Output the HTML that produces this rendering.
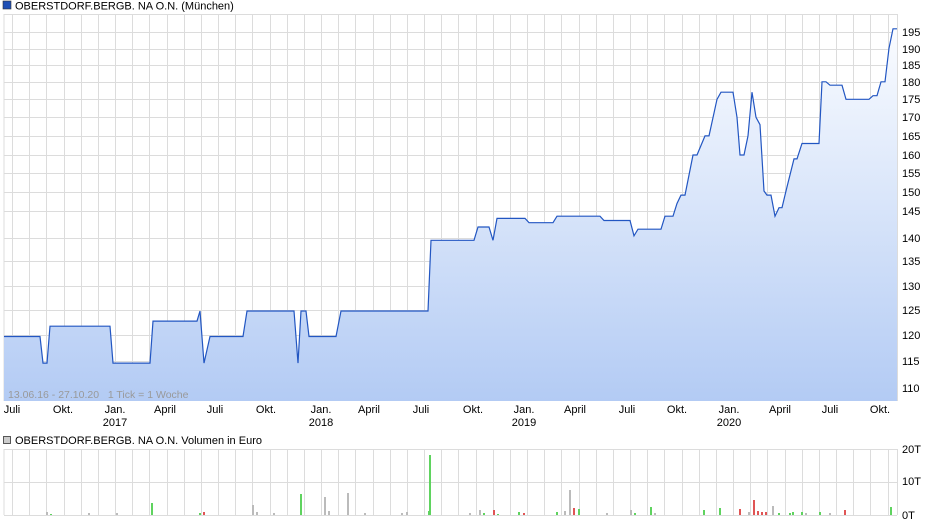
<!DOCTYPE html>
<html><head><meta charset="utf-8"><style>
body{margin:0;width:940px;height:526px;background:#fff;font-family:"Liberation Sans",sans-serif;overflow:hidden}
svg{position:absolute;left:0;top:0}
text{font-family:"Liberation Sans",sans-serif;font-size:11px;fill:#000}
</style></head><body>
<svg id="s" width="940" height="526" xmlns="http://www.w3.org/2000/svg">
<defs><linearGradient id="g" x1="0" y1="0" x2="0" y2="1"><stop offset="0" stop-color="#fafcff"/><stop offset="1" stop-color="#b3cbf4"/></linearGradient></defs>
<rect x="3" y="1" width="8" height="8" fill="#1f4fb5" stroke="#333" stroke-width="0.6"/>
<text x="15" y="9.5">OBERSTDORF.BERGB. NA O.N. (München)</text>
<rect x="3.5" y="436.5" width="7" height="7" fill="#ccc" stroke="#333" stroke-width="0.8"/>
<text x="15" y="444">OBERSTDORF.BERGB. NA O.N. Volumen in Euro</text>
<g id="grid" stroke="#dcdcdc" stroke-width="1"></g>
<path id="area" fill="url(#g)"/>
<g id="grid2" stroke="#c4d4f0" stroke-width="1" opacity="0.5"></g>
<path id="line" fill="none" stroke="#2256c2" stroke-width="1.2"/>
<text x="8" y="398" style="font-size:10.5px;fill:#999;white-space:pre" xml:space="preserve">13.06.16 - 27.10.20   1 Tick = 1 Woche</text>
<g id="lab"></g>
<g id="vol"></g>
</svg>
<script>
var ns="http://www.w3.org/2000/svg";
function el(p,t,a,txt){var e=document.createElementNS(ns,t);for(var k in a)e.setAttribute(k,a[k]);if(txt)e.textContent=txt;document.getElementById(p).appendChild(e);return e;}
var ys={195:32,190:49,185:65,180:82,175:99,170:117,165:136,160:155,155:173,150:192,145:211,140:238,135:261,130:286,125:310,120:335,115:361,110:388};
var L=4,R=897,T=14,B=401;
for(var v in ys){var y=ys[v];el("grid","line",{x1:L,x2:R,y1:y+.5,y2:y+.5});el("lab","text",{x:902,y:y+4},v);}
var months=[];for(var x=12;x<R;x+=17.17)months.push(Math.round(x)+.5);
months.forEach(function(x){el("grid","line",{x1:x,x2:x,y1:T,y2:B});el("grid","line",{x1:x,x2:x,y1:449,y2:515});});
[449,482,515].forEach(function(y){el("grid","line",{x1:L,x2:R,y1:y+.5,y2:y+.5});});
el("grid","line",{x1:R+.5,x2:R+.5,y1:T,y2:B});el("grid","line",{x1:R+.5,x2:R+.5,y1:449,y2:515});
el("grid","line",{x1:L,x2:L,y1:T,y2:B});el("grid","line",{x1:L,x2:R,y1:T+.5,y2:T+.5});
el("grid","line",{x1:L,x2:L,y1:449,y2:515});
var a=32+621.8*Math.log(195);
function py(p){return a-621.8*Math.log(p);}
var d=[[4,119.5],[40,119.5],[43,114.5],[47,114.5],[50,121.5],[110,121.5],[113,114.5],[150,114.5],[153,122.5],[197,122.5],[200,124.5],[204,114.5],[210,119.5],[243,119.5],[247,124.5],[294,124.5],[298,114.5],[301,124.5],[306,124.5],[309,119.5],[336,119.5],[341,124.5],[428,124.5],[431,139.5],[474,139.5],[478,142.5],[489,142.5],[493,139.5],[497,144.5],[525,144.5],[529,143.5],[553,143.5],[557,145],[600,145],[604,144],[630,144],[634,140.5],[638,142],[661,142],[665,145],[673,145],[677,148],[681,150],[685,150],[693,160],[697,160],[705,165],[709,165],[717,175],[721,177],[733,177],[737,170],[740,160],[744,160],[748,165],[752,177],[756,170],[760,168],[764,151],[767,150],[771,150],[775,145],[779,147],[782,147],[787,152],[794,159],[797,159],[802,163],[819,163],[822,180],[826,180],[830,179],[842,179],[846,175],[869,175],[873,176],[877,176],[881,180],[885,180],[889,190],[893,196],[897,196]];
var p="M"+d.map(function(q){return q[0]+","+py(q[1]).toFixed(1)}).join(" L");
document.getElementById("line").setAttribute("d",p);
document.getElementById("area").setAttribute("d",p+" L897,401 L4,401 Z");
var xl=[[12,"Juli"],[63,"Okt."],[115,"Jan.","2017"],[165,"April"],[215,"Juli"],[266,"Okt."],[321,"Jan.","2018"],[369,"April"],[421,"Juli"],[473,"Okt."],[524,"Jan.","2019"],[575,"April"],[627,"Juli"],[677,"Okt."],[729,"Jan.","2020"],[780,"April"],[830,"Juli"],[880,"Okt."]];
xl.forEach(function(q){el("lab","text",{x:q[0],y:413,"text-anchor":"middle"},q[1]);if(q[2])el("lab","text",{x:q[0],y:426,"text-anchor":"middle"},q[2]);});
el("lab","text",{x:902,y:453},"20T");el("lab","text",{x:902,y:485},"10T");el("lab","text",{x:902,y:519},"0T");
var G="#5fd35f",Rd="#e05555",Gy="#bbb";
var vb=[[47,3,Gy],[51,1,G],[89,2,Gy],[117,2,Gy],[152,12,G],[200,2,G],[204,3,Rd],[253,10,Gy],[257,3,Gy],[274,2,Gy],[301,21,G],[325,18,Gy],[329,4,Gy],[348,22,Gy],[365,2,Gy],[402,2,Gy],[407,3,Gy],[429,4,G],[430,60,G],[470,2,Gy],[480,5,Gy],[484,2,G],[494,5,Rd],[498,1,G],[519,3,G],[524,2,Rd],[557,3,G],[565,4,Gy],[570,25,Gy],[574,7,Rd],[579,6,G],[607,2,Gy],[631,5,Gy],[635,2,G],[651,8,G],[655,2,Gy],[704,5,G],[720,7,G],[740,6,Rd],[749,3,Gy],[754,15,Rd],[758,4,Rd],[762,3,Rd],[766,3,Rd],[773,9,Gy],[779,2,G],[790,2,G],[793,3,G],[802,3,G],[806,2,Gy],[820,3,G],[830,2,Gy],[845,5,Rd],[891,8,G]];
vb.forEach(function(q){el("vol","rect",{x:q[0]-1,y:515-q[1],width:2,height:q[1],fill:q[2]});});
</script>
</body></html>
